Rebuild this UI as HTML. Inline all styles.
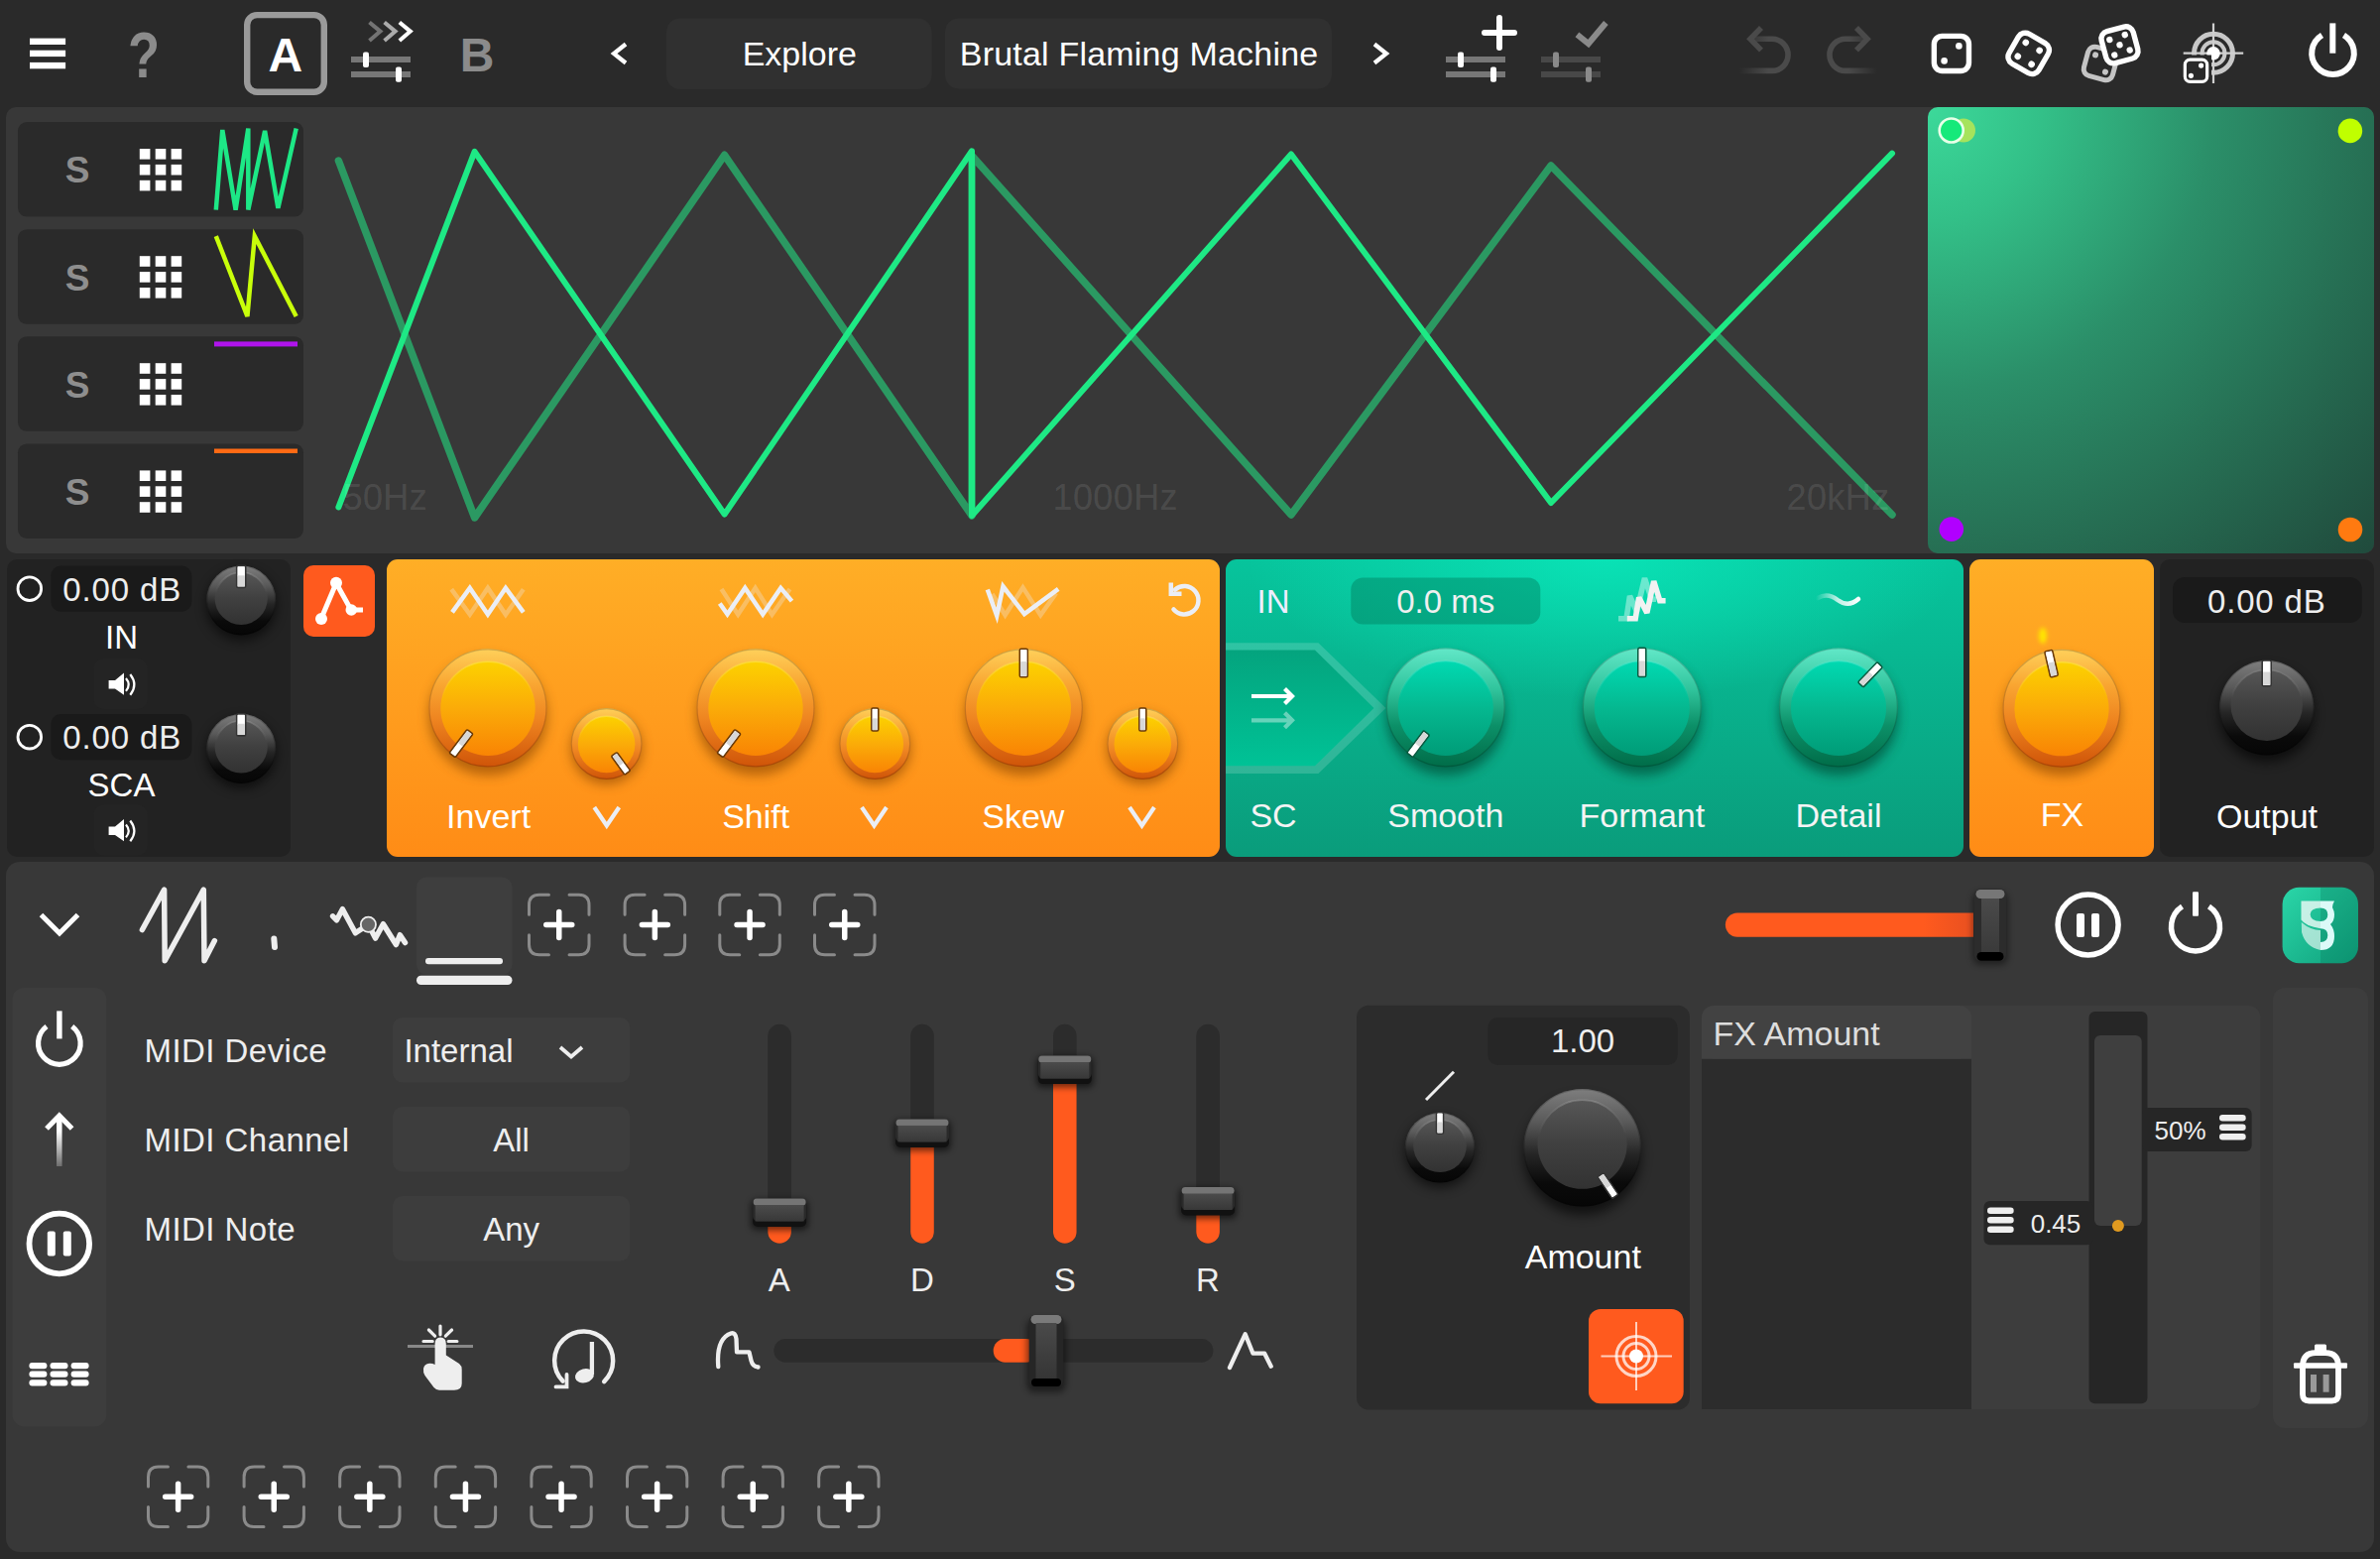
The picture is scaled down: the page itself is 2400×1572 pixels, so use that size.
<!DOCTYPE html>
<html><head><meta charset="utf-8">
<style>
*{margin:0;padding:0;box-sizing:border-box}
html,body{width:2400px;height:1572px;overflow:hidden;background:#2a2a2a;font-family:"Liberation Sans",sans-serif}
.a{position:absolute}
svg{position:absolute;left:0;top:0}
text{font-family:"Liberation Sans",sans-serif}
</style></head><body>
<div class="a" style="left:6px;top:108px;width:2388px;height:450px;background:#383838;border-radius:10px"></div>
<div class="a" style="left:1944px;top:108px;width:450px;height:450px;border-radius:10px;background:radial-gradient(farthest-corner at 0 0,#3cd99a 0%,#33c088 18%,#2b8f69 45%,#266e53 71%,#204a3c 100%)"></div>
<div class="a" style="left:7px;top:564px;width:286px;height:300px;background:#222;border-radius:10px"></div>
<div class="a" style="left:306px;top:570px;width:72px;height:72px;background:#ff5a1e;border-radius:10px"></div>
<div class="a" style="left:390px;top:564px;width:840px;height:300px;border-radius:11px;background:linear-gradient(180deg,#ffae26,#ff8c16)"></div>
<div class="a" style="left:1236px;top:564px;width:744px;height:300px;border-radius:11px;background:radial-gradient(ellipse 360px 140px at 380px 0px,rgba(10,236,190,0.75),rgba(10,236,190,0) 100%),linear-gradient(180deg,#07c49c,#0a9c7b)"></div>
<div class="a" style="left:1986px;top:564px;width:186px;height:300px;border-radius:11px;background:linear-gradient(180deg,#ffae26,#ff8c16)"></div>
<div class="a" style="left:2178px;top:564px;width:216px;height:300px;background:#222;border-radius:10px"></div>
<div class="a" style="left:6px;top:869px;width:2388px;height:696px;background:#383838;border-radius:14px"></div>
<svg width="2400" height="1572" viewBox="0 0 2400 1572">
<defs>
<filter id="blur" x="-50%" y="-50%" width="200%" height="200%"><feGaussianBlur stdDeviation="6"/></filter>
<filter id="blur2" x="-100%" y="-100%" width="300%" height="300%"><feGaussianBlur stdDeviation="2.2"/></filter>
<filter id="blur3" x="-50%" y="-50%" width="200%" height="200%"><feGaussianBlur stdDeviation="3"/></filter>
<linearGradient id="lg1" x1="0" y1="0" x2="1" y2="0"><stop offset="0" stop-color="#4a4a4a00"/><stop offset="0.6" stop-color="#4a4a4a"/><stop offset="1" stop-color="#4a4a4a"/></linearGradient><linearGradient id="lg2" x1="0" y1="0" x2="1" y2="0"><stop offset="0" stop-color="#4a4a4a"/><stop offset="0.4" stop-color="#4a4a4a"/><stop offset="1" stop-color="#4a4a4a00"/></linearGradient><linearGradient id="lg3" x1="0" y1="0" x2="0" y2="1"><stop offset="0" stop-color="#7e7e7e"/><stop offset="0.28" stop-color="#5a5a5a"/><stop offset="0.55" stop-color="#262626"/><stop offset="0.8" stop-color="#0a0a0a"/><stop offset="1" stop-color="#060606"/></linearGradient><linearGradient id="lg4" x1="0" y1="0" x2="0" y2="1"><stop offset="0" stop-color="#575757"/><stop offset="0.5" stop-color="#404040"/><stop offset="1" stop-color="#323232"/></linearGradient><linearGradient id="lg5" x1="0" y1="0" x2="0" y2="1"><stop offset="0" stop-color="#ffffff38"/><stop offset="0.4" stop-color="#ffffff00"/><stop offset="1" stop-color="#ffffff00"/></linearGradient><linearGradient id="lg6" x1="0" y1="0" x2="0" y2="1"><stop offset="0" stop-color="#7e7e7e"/><stop offset="0.28" stop-color="#5a5a5a"/><stop offset="0.55" stop-color="#262626"/><stop offset="0.8" stop-color="#0a0a0a"/><stop offset="1" stop-color="#060606"/></linearGradient><linearGradient id="lg7" x1="0" y1="0" x2="0" y2="1"><stop offset="0" stop-color="#575757"/><stop offset="0.5" stop-color="#404040"/><stop offset="1" stop-color="#323232"/></linearGradient><linearGradient id="lg8" x1="0" y1="0" x2="0" y2="1"><stop offset="0" stop-color="#ffffff38"/><stop offset="0.4" stop-color="#ffffff00"/><stop offset="1" stop-color="#ffffff00"/></linearGradient><linearGradient id="lg9" x1="0" y1="0" x2="0" y2="1"><stop offset="0" stop-color="#ffd05a"/><stop offset="0.3" stop-color="#f9a632"/><stop offset="0.6" stop-color="#ee8420"/><stop offset="1" stop-color="#cf5408"/></linearGradient><linearGradient id="lg10" x1="0" y1="0" x2="0" y2="1"><stop offset="0" stop-color="#fcd200"/><stop offset="0.5" stop-color="#fbab08"/><stop offset="1" stop-color="#f98404"/></linearGradient><linearGradient id="lg11" x1="0" y1="0" x2="0" y2="1"><stop offset="0" stop-color="#ffffff38"/><stop offset="0.4" stop-color="#ffffff00"/><stop offset="1" stop-color="#ffffff00"/></linearGradient><linearGradient id="lg12" x1="0" y1="0" x2="0" y2="1"><stop offset="0" stop-color="#ffd05a"/><stop offset="0.3" stop-color="#f9a632"/><stop offset="0.6" stop-color="#ee8420"/><stop offset="1" stop-color="#cf5408"/></linearGradient><linearGradient id="lg13" x1="0" y1="0" x2="0" y2="1"><stop offset="0" stop-color="#fcd200"/><stop offset="0.5" stop-color="#fbab08"/><stop offset="1" stop-color="#f98404"/></linearGradient><linearGradient id="lg14" x1="0" y1="0" x2="0" y2="1"><stop offset="0" stop-color="#ffffff38"/><stop offset="0.4" stop-color="#ffffff00"/><stop offset="1" stop-color="#ffffff00"/></linearGradient><linearGradient id="lg15" x1="0" y1="0" x2="0" y2="1"><stop offset="0" stop-color="#ffd05a"/><stop offset="0.3" stop-color="#f9a632"/><stop offset="0.6" stop-color="#ee8420"/><stop offset="1" stop-color="#cf5408"/></linearGradient><linearGradient id="lg16" x1="0" y1="0" x2="0" y2="1"><stop offset="0" stop-color="#fcd200"/><stop offset="0.5" stop-color="#fbab08"/><stop offset="1" stop-color="#f98404"/></linearGradient><linearGradient id="lg17" x1="0" y1="0" x2="0" y2="1"><stop offset="0" stop-color="#ffffff38"/><stop offset="0.4" stop-color="#ffffff00"/><stop offset="1" stop-color="#ffffff00"/></linearGradient><linearGradient id="lg18" x1="0" y1="0" x2="0" y2="1"><stop offset="0" stop-color="#ffd05a"/><stop offset="0.3" stop-color="#f9a632"/><stop offset="0.6" stop-color="#ee8420"/><stop offset="1" stop-color="#cf5408"/></linearGradient><linearGradient id="lg19" x1="0" y1="0" x2="0" y2="1"><stop offset="0" stop-color="#fcd200"/><stop offset="0.5" stop-color="#fbab08"/><stop offset="1" stop-color="#f98404"/></linearGradient><linearGradient id="lg20" x1="0" y1="0" x2="0" y2="1"><stop offset="0" stop-color="#ffffff38"/><stop offset="0.4" stop-color="#ffffff00"/><stop offset="1" stop-color="#ffffff00"/></linearGradient><linearGradient id="lg21" x1="0" y1="0" x2="0" y2="1"><stop offset="0" stop-color="#ffd05a"/><stop offset="0.3" stop-color="#f9a632"/><stop offset="0.6" stop-color="#ee8420"/><stop offset="1" stop-color="#cf5408"/></linearGradient><linearGradient id="lg22" x1="0" y1="0" x2="0" y2="1"><stop offset="0" stop-color="#fcd200"/><stop offset="0.5" stop-color="#fbab08"/><stop offset="1" stop-color="#f98404"/></linearGradient><linearGradient id="lg23" x1="0" y1="0" x2="0" y2="1"><stop offset="0" stop-color="#ffffff38"/><stop offset="0.4" stop-color="#ffffff00"/><stop offset="1" stop-color="#ffffff00"/></linearGradient><linearGradient id="lg24" x1="0" y1="0" x2="0" y2="1"><stop offset="0" stop-color="#ffd05a"/><stop offset="0.3" stop-color="#f9a632"/><stop offset="0.6" stop-color="#ee8420"/><stop offset="1" stop-color="#cf5408"/></linearGradient><linearGradient id="lg25" x1="0" y1="0" x2="0" y2="1"><stop offset="0" stop-color="#fcd200"/><stop offset="0.5" stop-color="#fbab08"/><stop offset="1" stop-color="#f98404"/></linearGradient><linearGradient id="lg26" x1="0" y1="0" x2="0" y2="1"><stop offset="0" stop-color="#ffffff38"/><stop offset="0.4" stop-color="#ffffff00"/><stop offset="1" stop-color="#ffffff00"/></linearGradient><linearGradient id="lg27" x1="0" y1="656" x2="0" y2="772" gradientUnits="userSpaceOnUse"><stop offset="0" stop-color="#04a47e"/><stop offset="1" stop-color="#00c296"/></linearGradient><linearGradient id="lg28" x1="0" y1="0" x2="0" y2="1"><stop offset="0" stop-color="#62e8c8"/><stop offset="0.35" stop-color="#30c49c"/><stop offset="0.65" stop-color="#0c9068"/><stop offset="1" stop-color="#006c48"/></linearGradient><linearGradient id="lg29" x1="0" y1="0" x2="0" y2="1"><stop offset="0" stop-color="#00dab2"/><stop offset="0.5" stop-color="#05b890"/><stop offset="1" stop-color="#009c78"/></linearGradient><linearGradient id="lg30" x1="0" y1="0" x2="0" y2="1"><stop offset="0" stop-color="#ffffff38"/><stop offset="0.4" stop-color="#ffffff00"/><stop offset="1" stop-color="#ffffff00"/></linearGradient><linearGradient id="lg31" x1="0" y1="0" x2="0" y2="1"><stop offset="0" stop-color="#62e8c8"/><stop offset="0.35" stop-color="#30c49c"/><stop offset="0.65" stop-color="#0c9068"/><stop offset="1" stop-color="#006c48"/></linearGradient><linearGradient id="lg32" x1="0" y1="0" x2="0" y2="1"><stop offset="0" stop-color="#00dab2"/><stop offset="0.5" stop-color="#05b890"/><stop offset="1" stop-color="#009c78"/></linearGradient><linearGradient id="lg33" x1="0" y1="0" x2="0" y2="1"><stop offset="0" stop-color="#ffffff38"/><stop offset="0.4" stop-color="#ffffff00"/><stop offset="1" stop-color="#ffffff00"/></linearGradient><linearGradient id="lg34" x1="0" y1="0" x2="0" y2="1"><stop offset="0" stop-color="#62e8c8"/><stop offset="0.35" stop-color="#30c49c"/><stop offset="0.65" stop-color="#0c9068"/><stop offset="1" stop-color="#006c48"/></linearGradient><linearGradient id="lg35" x1="0" y1="0" x2="0" y2="1"><stop offset="0" stop-color="#00dab2"/><stop offset="0.5" stop-color="#05b890"/><stop offset="1" stop-color="#009c78"/></linearGradient><linearGradient id="lg36" x1="0" y1="0" x2="0" y2="1"><stop offset="0" stop-color="#ffffff38"/><stop offset="0.4" stop-color="#ffffff00"/><stop offset="1" stop-color="#ffffff00"/></linearGradient><linearGradient id="lg37" x1="1831" y1="0" x2="1876" y2="0" gradientUnits="userSpaceOnUse"><stop offset="0" stop-color="#ffffff00"/><stop offset="0.5" stop-color="#ffffffc0"/><stop offset="1" stop-color="#ffffff"/></linearGradient><linearGradient id="lg38" x1="0" y1="0" x2="0" y2="1"><stop offset="0" stop-color="#ffd05a"/><stop offset="0.3" stop-color="#f9a632"/><stop offset="0.6" stop-color="#ee8420"/><stop offset="1" stop-color="#cf5408"/></linearGradient><linearGradient id="lg39" x1="0" y1="0" x2="0" y2="1"><stop offset="0" stop-color="#fcd200"/><stop offset="0.5" stop-color="#fbab08"/><stop offset="1" stop-color="#f98404"/></linearGradient><linearGradient id="lg40" x1="0" y1="0" x2="0" y2="1"><stop offset="0" stop-color="#ffffff38"/><stop offset="0.4" stop-color="#ffffff00"/><stop offset="1" stop-color="#ffffff00"/></linearGradient><linearGradient id="lg41" x1="0" y1="0" x2="0" y2="1"><stop offset="0" stop-color="#7e7e7e"/><stop offset="0.28" stop-color="#5a5a5a"/><stop offset="0.55" stop-color="#262626"/><stop offset="0.8" stop-color="#0a0a0a"/><stop offset="1" stop-color="#060606"/></linearGradient><linearGradient id="lg42" x1="0" y1="0" x2="0" y2="1"><stop offset="0" stop-color="#575757"/><stop offset="0.5" stop-color="#404040"/><stop offset="1" stop-color="#323232"/></linearGradient><linearGradient id="lg43" x1="0" y1="0" x2="0" y2="1"><stop offset="0" stop-color="#ffffff38"/><stop offset="0.4" stop-color="#ffffff00"/><stop offset="1" stop-color="#ffffff00"/></linearGradient><linearGradient id="lg44" x1="1740" y1="0" x2="1990" y2="0" gradientUnits="userSpaceOnUse"><stop offset="0" stop-color="#ff5a1e"/><stop offset="0.8" stop-color="#ff5a1e"/><stop offset="1" stop-color="#e85020"/></linearGradient><linearGradient id="lg45" x1="0" y1="906" x2="0" y2="960" gradientUnits="userSpaceOnUse"><stop offset="0" stop-color="#4a4a4a"/><stop offset="1" stop-color="#3a3a3a"/></linearGradient><linearGradient id="lg46" x1="0" y1="0" x2="1" y2="1"><stop offset="0" stop-color="#2ad6a8"/><stop offset="1" stop-color="#10a07c"/></linearGradient><linearGradient id="lg47" x1="0" y1="1125" x2="0" y2="1176" gradientUnits="userSpaceOnUse"><stop offset="0" stop-color="#ffffff"/><stop offset="0.3" stop-color="#ffffff"/><stop offset="1" stop-color="#ffffff40"/></linearGradient><linearGradient id="lg48" x1="0" y1="0" x2="1" y2="0"><stop offset="0" stop-color="#262626"/><stop offset="1" stop-color="#2e2e2e"/></linearGradient><linearGradient id="lg49" x1="0" y1="1214.5" x2="0" y2="1231.5" gradientUnits="userSpaceOnUse"><stop offset="0" stop-color="#4c4c4c"/><stop offset="1" stop-color="#383838"/></linearGradient><linearGradient id="lg50" x1="0" y1="1134.4" x2="0" y2="1151.4" gradientUnits="userSpaceOnUse"><stop offset="0" stop-color="#4c4c4c"/><stop offset="1" stop-color="#383838"/></linearGradient><linearGradient id="lg51" x1="0" y1="1070.6" x2="0" y2="1087.6" gradientUnits="userSpaceOnUse"><stop offset="0" stop-color="#4c4c4c"/><stop offset="1" stop-color="#383838"/></linearGradient><linearGradient id="lg52" x1="0" y1="1203" x2="0" y2="1220" gradientUnits="userSpaceOnUse"><stop offset="0" stop-color="#4c4c4c"/><stop offset="1" stop-color="#383838"/></linearGradient><linearGradient id="lg53" x1="0" y1="1334" x2="0" y2="1390" gradientUnits="userSpaceOnUse"><stop offset="0" stop-color="#4a4a4a"/><stop offset="1" stop-color="#353535"/></linearGradient><linearGradient id="lg54" x1="0" y1="0" x2="0" y2="1"><stop offset="0" stop-color="#7e7e7e"/><stop offset="0.28" stop-color="#5a5a5a"/><stop offset="0.55" stop-color="#262626"/><stop offset="0.8" stop-color="#0a0a0a"/><stop offset="1" stop-color="#060606"/></linearGradient><linearGradient id="lg55" x1="0" y1="0" x2="0" y2="1"><stop offset="0" stop-color="#575757"/><stop offset="0.5" stop-color="#404040"/><stop offset="1" stop-color="#323232"/></linearGradient><linearGradient id="lg56" x1="0" y1="0" x2="0" y2="1"><stop offset="0" stop-color="#ffffff38"/><stop offset="0.4" stop-color="#ffffff00"/><stop offset="1" stop-color="#ffffff00"/></linearGradient><linearGradient id="lg57" x1="0" y1="0" x2="0" y2="1"><stop offset="0" stop-color="#7e7e7e"/><stop offset="0.28" stop-color="#5a5a5a"/><stop offset="0.55" stop-color="#262626"/><stop offset="0.8" stop-color="#0a0a0a"/><stop offset="1" stop-color="#060606"/></linearGradient><linearGradient id="lg58" x1="0" y1="0" x2="0" y2="1"><stop offset="0" stop-color="#575757"/><stop offset="0.5" stop-color="#404040"/><stop offset="1" stop-color="#323232"/></linearGradient><linearGradient id="lg59" x1="0" y1="0" x2="0" y2="1"><stop offset="0" stop-color="#ffffff38"/><stop offset="0.4" stop-color="#ffffff00"/><stop offset="1" stop-color="#ffffff00"/></linearGradient>
</defs>
<g id="topbar"><rect x="30" y="38.6" width="36.1" height="6.4" fill="#fff"/><rect x="30" y="50.7" width="36.1" height="6.4" fill="#fff"/><rect x="30" y="62.9" width="36.1" height="6.4" fill="#fff"/><text x="145" y="78" font-size="64" font-weight="700" fill="#8b8b8b" text-anchor="middle" transform="translate(145 0) scale(0.82 1) translate(-145 0)">?</text><rect x="249.2" y="15.1" width="77.6" height="77.6" rx="10" fill="none" stroke="#9a9a9a" stroke-width="6.4"/><text x="287.8" y="72.3" font-size="48" fill="#fff" font-weight="700" text-anchor="middle" >A</text><path d="M372.5 22.5 L383.5 31.6 L372.5 41" fill="none" stroke="#747474" stroke-width="4"/><path d="M387.6 22.5 L398.6 31.6 L387.6 41" fill="none" stroke="#ababab" stroke-width="4"/><path d="M402.8 22.5 L413.8 31.6 L402.8 41" fill="none" stroke="#ffffff" stroke-width="4"/><rect x="354" y="57" width="60" height="6" fill="#777"/><rect x="354" y="72" width="60" height="6" fill="#777"/><rect x="366" y="52.4" width="6" height="15.5" rx="2" fill="#fff"/><rect x="399" y="67.5" width="6" height="15.2" rx="2" fill="#fff"/><text x="481" y="72.2" font-size="48" fill="#8b8b8b" font-weight="700" text-anchor="middle" >B</text><path d="M631 44.5 L619 54 L631 63.5" fill="none" stroke="#fff" stroke-width="4.2"/><rect x="672" y="18.5" width="267.5" height="71.5" rx="14" fill="#303030"/><text x="806.3" y="65.5" font-size="34" fill="#fff" font-weight="400" text-anchor="middle" >Explore</text><rect x="953" y="18.5" width="390" height="71" rx="14" fill="#303030"/><text x="1148.6" y="65.5" font-size="34" fill="#fff" font-weight="400" text-anchor="middle" letter-spacing="0.2">Brutal Flaming Machine</text><path d="M1386 44.5 L1398 54 L1386 63.5" fill="none" stroke="#fff" stroke-width="4.2"/><rect x="1458" y="57" width="60" height="6" fill="#777"/><rect x="1458" y="72" width="60" height="6" fill="#777"/><rect x="1470" y="52.4" width="6" height="15.5" rx="2" fill="#fff"/><rect x="1503" y="67.5" width="6" height="15.2" rx="2" fill="#fff"/><path d="M1497 33 H1527 M1512 18 V48" stroke="#fff" stroke-width="6" stroke-linecap="round"/><rect x="1554" y="57" width="60" height="6" fill="#484848"/><rect x="1554" y="72" width="60" height="6" fill="#484848"/><rect x="1566" y="52.4" width="6" height="15.5" rx="2" fill="#8a8a8a"/><rect x="1599" y="67.5" width="6" height="15.2" rx="2" fill="#8a8a8a"/><path d="M1590.4 34.8 L1601.8 44 L1619.4 23" fill="none" stroke="#8a8a8a" stroke-width="6"/><path d="M1776 28 L1765 39.3 L1776 50.6" fill="none" stroke="#4a4a4a" stroke-width="5.6"/><path d="M1766 39.3 H1787 A16 16 0 0 1 1787 71.4 H1754" fill="none" stroke="url(#lg1)" stroke-width="5.6"/><path d="M1872 28 L1883 39.3 L1872 50.6" fill="none" stroke="#4a4a4a" stroke-width="5.6"/><path d="M1882 39.3 H1861 A16 16 0 0 0 1861 71.4 H1893" fill="none" stroke="url(#lg2)" stroke-width="5.6"/><g transform="rotate(0 1967.9 53.9)"><rect x="1950.3500000000001" y="36.35" width="35.1" height="35.1" rx="8.1" fill="#2a2a2a" stroke="#fff" stroke-width="5.4"/><circle cx="1975.3925000000002" cy="46.4075" r="3.3" fill="#fff"/><circle cx="1960.6100000000001" cy="61.3925" r="3.3" fill="#fff"/></g><g transform="rotate(30 2045.7 53.9)"><rect x="2028.4" y="36.6" width="34.6" height="34.6" rx="8.0" fill="#2a2a2a" stroke="#fff" stroke-width="5.4"/><circle cx="2037.7" cy="45.9" r="3.3" fill="#fff"/><circle cx="2053.7" cy="45.9" r="3.3" fill="#fff"/><circle cx="2037.7" cy="61.9" r="3.3" fill="#fff"/><circle cx="2053.7" cy="61.9" r="3.3" fill="#fff"/></g><g transform="rotate(15 2118 64)"><rect x="2103.0" y="49.0" width="30" height="30" rx="7.0" fill="#2a2a2a" stroke="#c4c4c4" stroke-width="5"/><circle cx="2111.0" cy="57.0" r="3" fill="#c4c4c4"/><circle cx="2125.0" cy="71.0" r="3" fill="#c4c4c4"/></g><g transform="rotate(-15 2137.5 45.3)"><rect x="2120.95" y="28.749999999999996" width="33.1" height="33.1" rx="7.7" fill="#2a2a2a" stroke="#fff" stroke-width="5.4"/><circle cx="2129.03" cy="37.599999999999994" r="3.2" fill="#fff"/><circle cx="2145.2" cy="36.83" r="3.2" fill="#fff"/><circle cx="2137.5" cy="45.3" r="3.2" fill="#fff"/><circle cx="2129.8" cy="53.769999999999996" r="3.2" fill="#fff"/><circle cx="2145.97" cy="53.0" r="3.2" fill="#fff"/></g><circle cx="2232" cy="53.7" r="19.5" fill="none" stroke="#c8c8c8" stroke-width="5"/><circle cx="2232" cy="53.7" r="11.5" fill="none" stroke="#c8c8c8" stroke-width="4"/><path d="M2232 23.4 V84 M2201.7 53.7 H2262.2" stroke="#d0d0d0" stroke-width="2.2"/><circle cx="2232" cy="53.7" r="6.8" fill="#fff"/><rect x="2199" y="55.5" width="31" height="31" fill="#2a2a2a"/><g transform="rotate(0 2214.5 71.2)"><rect x="2203.35" y="60.050000000000004" width="22.3" height="22.3" rx="5.1000000000000005" fill="#2a2a2a" stroke="#fff" stroke-width="3.2"/><circle cx="2219.6" cy="66.10000000000001" r="2.6" fill="#fff"/><circle cx="2209.4" cy="76.3" r="2.6" fill="#fff"/></g><path d="M2341.5 35.5 A21.3 21.3 0 1 0 2363.5 35.5" fill="none" stroke="#fff" stroke-width="6"/><rect x="2349.3" y="23.4" width="6" height="30.3" fill="#fff"/></g><g id="row2"><rect x="18" y="123" width="288" height="95.6" rx="9" fill="#2a2a2a"/><text x="78" y="184.3" font-size="37" fill="#8e8e8e" font-weight="700" text-anchor="middle" >S</text><rect x="140.8" y="150.0" width="10.6" height="10.6" fill="#fff"/><rect x="140.8" y="165.9" width="10.6" height="10.6" fill="#fff"/><rect x="140.8" y="181.8" width="10.6" height="10.6" fill="#fff"/><rect x="156.70000000000002" y="150.0" width="10.6" height="10.6" fill="#fff"/><rect x="156.70000000000002" y="165.9" width="10.6" height="10.6" fill="#fff"/><rect x="156.70000000000002" y="181.8" width="10.6" height="10.6" fill="#fff"/><rect x="172.60000000000002" y="150.0" width="10.6" height="10.6" fill="#fff"/><rect x="172.60000000000002" y="165.9" width="10.6" height="10.6" fill="#fff"/><rect x="172.60000000000002" y="181.8" width="10.6" height="10.6" fill="#fff"/><rect x="18" y="231.2" width="288" height="95.6" rx="9" fill="#2a2a2a"/><text x="78" y="292.5" font-size="37" fill="#8e8e8e" font-weight="700" text-anchor="middle" >S</text><rect x="140.8" y="258.2" width="10.6" height="10.6" fill="#fff"/><rect x="140.8" y="274.09999999999997" width="10.6" height="10.6" fill="#fff"/><rect x="140.8" y="290.0" width="10.6" height="10.6" fill="#fff"/><rect x="156.70000000000002" y="258.2" width="10.6" height="10.6" fill="#fff"/><rect x="156.70000000000002" y="274.09999999999997" width="10.6" height="10.6" fill="#fff"/><rect x="156.70000000000002" y="290.0" width="10.6" height="10.6" fill="#fff"/><rect x="172.60000000000002" y="258.2" width="10.6" height="10.6" fill="#fff"/><rect x="172.60000000000002" y="274.09999999999997" width="10.6" height="10.6" fill="#fff"/><rect x="172.60000000000002" y="290.0" width="10.6" height="10.6" fill="#fff"/><rect x="18" y="339.2" width="288" height="95.6" rx="9" fill="#2a2a2a"/><text x="78" y="400.5" font-size="37" fill="#8e8e8e" font-weight="700" text-anchor="middle" >S</text><rect x="140.8" y="366.2" width="10.6" height="10.6" fill="#fff"/><rect x="140.8" y="382.09999999999997" width="10.6" height="10.6" fill="#fff"/><rect x="140.8" y="398.0" width="10.6" height="10.6" fill="#fff"/><rect x="156.70000000000002" y="366.2" width="10.6" height="10.6" fill="#fff"/><rect x="156.70000000000002" y="382.09999999999997" width="10.6" height="10.6" fill="#fff"/><rect x="156.70000000000002" y="398.0" width="10.6" height="10.6" fill="#fff"/><rect x="172.60000000000002" y="366.2" width="10.6" height="10.6" fill="#fff"/><rect x="172.60000000000002" y="382.09999999999997" width="10.6" height="10.6" fill="#fff"/><rect x="172.60000000000002" y="398.0" width="10.6" height="10.6" fill="#fff"/><rect x="18" y="447.4" width="288" height="95.6" rx="9" fill="#2a2a2a"/><text x="78" y="508.7" font-size="37" fill="#8e8e8e" font-weight="700" text-anchor="middle" >S</text><rect x="140.8" y="474.4" width="10.6" height="10.6" fill="#fff"/><rect x="140.8" y="490.29999999999995" width="10.6" height="10.6" fill="#fff"/><rect x="140.8" y="506.2" width="10.6" height="10.6" fill="#fff"/><rect x="156.70000000000002" y="474.4" width="10.6" height="10.6" fill="#fff"/><rect x="156.70000000000002" y="490.29999999999995" width="10.6" height="10.6" fill="#fff"/><rect x="156.70000000000002" y="506.2" width="10.6" height="10.6" fill="#fff"/><rect x="172.60000000000002" y="474.4" width="10.6" height="10.6" fill="#fff"/><rect x="172.60000000000002" y="490.29999999999995" width="10.6" height="10.6" fill="#fff"/><rect x="172.60000000000002" y="506.2" width="10.6" height="10.6" fill="#fff"/><polyline points="217.8,211.6 224.3,131 237.6,211.6 250.3,129.5 250.3,211.6 267.1,131.9 280.4,209.8 298.7,129.5" fill="none" stroke="#1de886" stroke-width="4.5" stroke-linejoin="miter" stroke-linecap="butt"/><polyline points="217.8,238.1 249.4,319 256.8,238.1 298.7,319" fill="none" stroke="#c8ff0a" stroke-width="4.5"/><rect x="216" y="344.4" width="84" height="5" fill="#b014ec"/><rect x="216" y="452.5" width="84" height="4.5" fill="#ff6a14"/><polyline points="341.4,162 478.6,522 730.6,156.3 980,520 980,157 1302,519 1564,167 1908,519" fill="none" stroke="#2b9962" stroke-width="7.5" stroke-linecap="round" stroke-linejoin="round"/><polyline points="341.4,511.4 478.6,152.9 730.6,518.6 980,152.3 980,520 1302,155.5 1564,507 1908,154.7" fill="none" stroke="#1ee985" stroke-width="6" stroke-linecap="round" stroke-linejoin="round"/><text x="345.5" y="514" font-size="36" fill="#ffffff" font-weight="400" text-anchor="start" fill-opacity="0.11" letter-spacing="0.4">50Hz</text><text x="1061.5" y="514" font-size="36" fill="#ffffff" font-weight="400" text-anchor="start" fill-opacity="0.11" letter-spacing="0.4">1000Hz</text><text x="1801.5" y="514" font-size="36" fill="#ffffff" font-weight="400" text-anchor="start" fill-opacity="0.11" letter-spacing="0.4">20kHz</text><circle cx="1980" cy="131.5" r="12" fill="#a6e35c"/><circle cx="1967.7" cy="131.5" r="12" fill="#16e97a" stroke="#e8ffe8" stroke-width="2.6"/><circle cx="2369.9" cy="131.9" r="12.3" fill="#c0ff00"/><circle cx="1967.8" cy="533.6" r="12.3" fill="#b100ff"/><circle cx="2370" cy="534" r="12.3" fill="#ff7a10"/></g><g id="row3"><circle cx="29.8" cy="593.7" r="11.8" fill="none" stroke="#fff" stroke-width="2.8"/><rect x="51.3" y="570.5" width="142" height="46.2" rx="10" fill="#1a1a1a"/><text x="123.2" y="605.8" font-size="33" fill="#eee" font-weight="400" text-anchor="middle" letter-spacing="0.85">0.00 dB</text><text x="122.5" y="653.6" font-size="33" fill="#fff" font-weight="400" text-anchor="middle" >IN</text><rect x="94.4" y="664" width="54.4" height="51" rx="10" fill="#242424"/><path d="M109.6 686.0 H116 L125 678.4 V700.8 L116 694.4 H109.6 Z" fill="#fff"/><path d="M127 684.0 Q132.5 690.4 127 696.9 M131.3 680.0 Q139.5 690.4 131.3 700.8" fill="none" stroke="#fff" stroke-width="2.2"/><circle cx="243.2" cy="610.3" r="35.0" fill="#000" opacity="0.6" filter="url(#blur)"/><circle cx="243.2" cy="605.4" r="35" fill="url(#lg3)"/><circle cx="243.2" cy="603.3" r="26.6" fill="url(#lg4)"/><circle cx="243.2" cy="603.3" r="26.0" fill="none" stroke="url(#lg5)" stroke-width="1.6"/><circle cx="243.2" cy="605.4" r="34.4" fill="none" stroke="#000" stroke-opacity="0.18" stroke-width="1.2"/><g transform="rotate(0 243.2 605.4)"><rect x="238.7" y="570.4" width="9" height="22" rx="1.5" fill="#f2f2f2" stroke="#333333" stroke-width="1.6"/><rect x="239.7" y="571.4" width="7" height="9.9" fill="#ffffff"/><rect x="239.7" y="580.3" width="7" height="11.100000000000001" fill="#d8d8d8"/></g><circle cx="29.8" cy="743.2" r="11.8" fill="none" stroke="#fff" stroke-width="2.8"/><rect x="51.3" y="720.0" width="142" height="46.2" rx="10" fill="#1a1a1a"/><text x="123.2" y="755.3" font-size="33" fill="#eee" font-weight="400" text-anchor="middle" letter-spacing="0.85">0.00 dB</text><text x="122.5" y="803.1" font-size="33" fill="#fff" font-weight="400" text-anchor="middle" >SCA</text><rect x="94.4" y="811.5" width="54.4" height="51" rx="10" fill="#242424"/><path d="M109.6 833.5 H116 L125 825.9 V848.3 L116 841.9 H109.6 Z" fill="#fff"/><path d="M127 831.5 Q132.5 837.9 127 844.4 M131.3 827.5 Q139.5 837.9 131.3 848.3" fill="none" stroke="#fff" stroke-width="2.2"/><circle cx="243.2" cy="759.8" r="35.0" fill="#000" opacity="0.6" filter="url(#blur)"/><circle cx="243.2" cy="754.9" r="35" fill="url(#lg6)"/><circle cx="243.2" cy="752.8" r="26.6" fill="url(#lg7)"/><circle cx="243.2" cy="752.8" r="26.0" fill="none" stroke="url(#lg8)" stroke-width="1.6"/><circle cx="243.2" cy="754.9" r="34.4" fill="none" stroke="#000" stroke-opacity="0.18" stroke-width="1.2"/><g transform="rotate(0 243.2 754.9)"><rect x="238.7" y="719.9" width="9" height="22" rx="1.5" fill="#f2f2f2" stroke="#333333" stroke-width="1.6"/><rect x="239.7" y="720.9" width="7" height="9.9" fill="#ffffff"/><rect x="239.7" y="729.8" width="7" height="11.100000000000001" fill="#d8d8d8"/></g><polyline points="324,623.5 339,588 354,615 366,615" fill="none" stroke="#fff" stroke-width="5" stroke-linejoin="round"/><circle cx="324" cy="624" r="6" fill="#fff"/><circle cx="339" cy="587.8" r="6" fill="#fff"/><circle cx="354.3" cy="615" r="5.8" fill="#fff"/><polyline points="455.2,594.2 473.8,619.7 491.9,592.9 509.9,619.7 527.8,594.2" fill="none" stroke="#ebeef5" stroke-width="4.5" opacity="0.3"/><polyline points="456,617.3 473.8,592.9 491.9,619.4 509.9,592.9 527.8,617.3" fill="none" stroke="#ebeef5" stroke-width="4.5"/><polyline points="727.5,594 744.2,619.7 761.7,592.9 778.5,619.7 796.5,594" fill="none" stroke="#ebeef5" stroke-width="4.5" opacity="0.3"/><polyline points="725.8,608.5 733.5,619.4 751.3,592.9 769.2,619.4 787.3,592.9 798.5,606.1" fill="none" stroke="#ebeef5" stroke-width="4.5"/><polyline points="1000.5,599 1013.6,620.2 1031.5,592.3 1049.3,620.2 1065,598.1" fill="none" stroke="#ebeef5" stroke-width="4.5" opacity="0.3"/><polyline points="995.8,594.4 1005.2,620.7 1011.5,591.3 1033,619.1 1067.2,593.9" fill="none" stroke="#ebeef5" stroke-width="4.5"/><path d="M1185 594.5 A14.2 14.2 0 1 1 1183.5 614.5" fill="none" stroke="#ebeef5" stroke-width="4.5" stroke-linecap="round"/><path d="M1180.8 587.5 V598.8 H1191.5" fill="none" stroke="#ebeef5" stroke-width="4.5"/><circle cx="492" cy="722.144" r="59.6" fill="#7a3a00" opacity="0.55" filter="url(#blur)"/><circle cx="492" cy="713.8" r="59.6" fill="url(#lg9)"/><circle cx="492" cy="714.3" r="47.68000000000001" fill="url(#lg10)"/><circle cx="492" cy="714.3" r="47.080000000000005" fill="none" stroke="url(#lg11)" stroke-width="1.6"/><circle cx="492" cy="713.8" r="59.0" fill="none" stroke="#000" stroke-opacity="0.18" stroke-width="1.2"/><g transform="rotate(-143 492 713.8)"><rect x="488.25" y="654.1999999999999" width="7.5" height="29.6" rx="1.5" fill="#f2f2f2" stroke="#6a3a08" stroke-width="1.6"/><rect x="489.25" y="655.1999999999999" width="5.5" height="13.32" fill="#ffffff"/><rect x="489.25" y="667.52" width="5.5" height="15.280000000000001" fill="#d8d8d8"/></g><circle cx="611.6" cy="755.04" r="36.0" fill="#7a3a00" opacity="0.55" filter="url(#blur)"/><circle cx="611.6" cy="750" r="36" fill="url(#lg12)"/><circle cx="611.6" cy="750.5" r="28.8" fill="url(#lg13)"/><circle cx="611.6" cy="750.5" r="28.2" fill="none" stroke="url(#lg14)" stroke-width="1.6"/><circle cx="611.6" cy="750" r="35.4" fill="none" stroke="#000" stroke-opacity="0.18" stroke-width="1.2"/><g transform="rotate(144 611.6 750)"><rect x="608.1" y="714" width="7" height="23" rx="1.5" fill="#f2f2f2" stroke="#6a3a08" stroke-width="1.6"/><rect x="609.1" y="715" width="5" height="10.35" fill="#ffffff"/><rect x="609.1" y="724.35" width="5" height="11.65" fill="#d8d8d8"/></g><circle cx="762" cy="722.144" r="59.6" fill="#7a3a00" opacity="0.55" filter="url(#blur)"/><circle cx="762" cy="713.8" r="59.6" fill="url(#lg15)"/><circle cx="762" cy="714.3" r="47.68000000000001" fill="url(#lg16)"/><circle cx="762" cy="714.3" r="47.080000000000005" fill="none" stroke="url(#lg17)" stroke-width="1.6"/><circle cx="762" cy="713.8" r="59.0" fill="none" stroke="#000" stroke-opacity="0.18" stroke-width="1.2"/><g transform="rotate(-143 762 713.8)"><rect x="758.25" y="654.1999999999999" width="7.5" height="29.6" rx="1.5" fill="#f2f2f2" stroke="#6a3a08" stroke-width="1.6"/><rect x="759.25" y="655.1999999999999" width="5.5" height="13.32" fill="#ffffff"/><rect x="759.25" y="667.52" width="5.5" height="15.280000000000001" fill="#d8d8d8"/></g><circle cx="882.3" cy="755.04" r="36.0" fill="#7a3a00" opacity="0.55" filter="url(#blur)"/><circle cx="882.3" cy="750" r="36" fill="url(#lg18)"/><circle cx="882.3" cy="750.5" r="28.8" fill="url(#lg19)"/><circle cx="882.3" cy="750.5" r="28.2" fill="none" stroke="url(#lg20)" stroke-width="1.6"/><circle cx="882.3" cy="750" r="35.4" fill="none" stroke="#000" stroke-opacity="0.18" stroke-width="1.2"/><g transform="rotate(0 882.3 750)"><rect x="878.8" y="714" width="7" height="23" rx="1.5" fill="#f2f2f2" stroke="#6a3a08" stroke-width="1.6"/><rect x="879.8" y="715" width="5" height="10.35" fill="#ffffff"/><rect x="879.8" y="724.35" width="5" height="11.65" fill="#d8d8d8"/></g><circle cx="1032.3" cy="722.144" r="59.6" fill="#7a3a00" opacity="0.55" filter="url(#blur)"/><circle cx="1032.3" cy="713.8" r="59.6" fill="url(#lg21)"/><circle cx="1032.3" cy="714.3" r="47.68000000000001" fill="url(#lg22)"/><circle cx="1032.3" cy="714.3" r="47.080000000000005" fill="none" stroke="url(#lg23)" stroke-width="1.6"/><circle cx="1032.3" cy="713.8" r="59.0" fill="none" stroke="#000" stroke-opacity="0.18" stroke-width="1.2"/><g transform="rotate(0 1032.3 713.8)"><rect x="1028.3" y="654.1999999999999" width="8" height="28.6" rx="1.5" fill="#f2f2f2" stroke="#6a3a08" stroke-width="1.6"/><rect x="1029.3" y="655.1999999999999" width="6" height="12.870000000000001" fill="#ffffff"/><rect x="1029.3" y="667.0699999999999" width="6" height="14.730000000000002" fill="#d8d8d8"/></g><circle cx="1152.3" cy="755.04" r="36.0" fill="#7a3a00" opacity="0.55" filter="url(#blur)"/><circle cx="1152.3" cy="750" r="36" fill="url(#lg24)"/><circle cx="1152.3" cy="750.5" r="28.8" fill="url(#lg25)"/><circle cx="1152.3" cy="750.5" r="28.2" fill="none" stroke="url(#lg26)" stroke-width="1.6"/><circle cx="1152.3" cy="750" r="35.4" fill="none" stroke="#000" stroke-opacity="0.18" stroke-width="1.2"/><g transform="rotate(0 1152.3 750)"><rect x="1148.8" y="714" width="7" height="23" rx="1.5" fill="#f2f2f2" stroke="#6a3a08" stroke-width="1.6"/><rect x="1149.8" y="715" width="5" height="10.35" fill="#ffffff"/><rect x="1149.8" y="724.35" width="5" height="11.65" fill="#d8d8d8"/></g><text x="492.6" y="834.8" font-size="34" fill="#fff" font-weight="400" text-anchor="middle" >Invert</text><text x="762.2" y="834.8" font-size="34" fill="#fff" font-weight="400" text-anchor="middle" >Shift</text><text x="1031.8" y="834.8" font-size="34" fill="#fff" font-weight="400" text-anchor="middle" >Skew</text><path d="M599.3 814 L611.8 832.5 L624.3 814" fill="none" stroke="#ebeef5" stroke-width="4.2"/><path d="M869.0 814 L881.5 832.5 L894.0 814" fill="none" stroke="#ebeef5" stroke-width="4.2"/><path d="M1139.0 814 L1151.5 832.5 L1164.0 814" fill="none" stroke="#ebeef5" stroke-width="4.2"/><text x="1284" y="618" font-size="33" fill="#eef" font-weight="400" text-anchor="middle" >IN</text><rect x="1362.3" y="582.4" width="191" height="47" rx="12" fill="#007a5a" opacity="0.42"/><text x="1457.8" y="618" font-size="33" fill="#f0f0f0" font-weight="400" text-anchor="middle" >0.0 ms</text><path d="M1236 648.2 H1329.5 L1397.5 714 L1329.5 780 H1236 Z" fill="#fff" opacity="0.16"/><path d="M1236 655.6 H1326 L1385.5 714 L1326 772.3 H1236 Z" fill="url(#lg27)"/><path d="M1262 702 H1303 M1295.5 694.5 L1303 702 L1295.5 709.5" fill="none" stroke="#fff" stroke-width="4.2"/><path d="M1262 726.3 H1303 M1295.5 718.8 L1303 726.3 L1295.5 733.8" fill="none" stroke="#fff" stroke-width="4.2" opacity="0.4"/><circle cx="1457.8" cy="721.8" r="60.0" fill="#05402c" opacity="0.6" filter="url(#blur)"/><circle cx="1457.8" cy="713.4" r="60" fill="url(#lg28)"/><circle cx="1457.8" cy="713.9" r="48.0" fill="url(#lg29)"/><circle cx="1457.8" cy="713.9" r="47.4" fill="none" stroke="url(#lg30)" stroke-width="1.6"/><circle cx="1457.8" cy="713.4" r="59.4" fill="none" stroke="#000" stroke-opacity="0.18" stroke-width="1.2"/><g transform="rotate(-143 1457.8 713.4)"><rect x="1454.05" y="653.4" width="7.5" height="28" rx="1.5" fill="#f2f2f2" stroke="#0a5a40" stroke-width="1.6"/><rect x="1455.05" y="654.4" width="5.5" height="12.6" fill="#ffffff"/><rect x="1455.05" y="666.0" width="5.5" height="14.400000000000002" fill="#d8d8d8"/></g><circle cx="1655.8" cy="721.8" r="60.0" fill="#05402c" opacity="0.6" filter="url(#blur)"/><circle cx="1655.8" cy="713.4" r="60" fill="url(#lg31)"/><circle cx="1655.8" cy="713.9" r="48.0" fill="url(#lg32)"/><circle cx="1655.8" cy="713.9" r="47.4" fill="none" stroke="url(#lg33)" stroke-width="1.6"/><circle cx="1655.8" cy="713.4" r="59.4" fill="none" stroke="#000" stroke-opacity="0.18" stroke-width="1.2"/><g transform="rotate(0 1655.8 713.4)"><rect x="1651.8" y="653.4" width="8" height="29" rx="1.5" fill="#f2f2f2" stroke="#0a5a40" stroke-width="1.6"/><rect x="1652.8" y="654.4" width="6" height="13.05" fill="#ffffff"/><rect x="1652.8" y="666.4499999999999" width="6" height="14.950000000000001" fill="#d8d8d8"/></g><circle cx="1854" cy="721.8" r="60.0" fill="#05402c" opacity="0.6" filter="url(#blur)"/><circle cx="1854" cy="713.4" r="60" fill="url(#lg34)"/><circle cx="1854" cy="713.9" r="48.0" fill="url(#lg35)"/><circle cx="1854" cy="713.9" r="47.4" fill="none" stroke="url(#lg36)" stroke-width="1.6"/><circle cx="1854" cy="713.4" r="59.4" fill="none" stroke="#000" stroke-opacity="0.18" stroke-width="1.2"/><g transform="rotate(44 1854 713.4)"><rect x="1850.25" y="653.4" width="7.5" height="28" rx="1.5" fill="#f2f2f2" stroke="#0a5a40" stroke-width="1.6"/><rect x="1851.25" y="654.4" width="5.5" height="12.6" fill="#ffffff"/><rect x="1851.25" y="666.0" width="5.5" height="14.400000000000002" fill="#d8d8d8"/></g><text x="1284" y="834" font-size="34" fill="#f4f4f4" font-weight="400" text-anchor="middle" >SC</text><text x="1457.8" y="834" font-size="34" fill="#f4f4f4" font-weight="400" text-anchor="middle" >Smooth</text><text x="1655.9" y="834" font-size="34" fill="#f4f4f4" font-weight="400" text-anchor="middle" >Formant</text><text x="1854" y="834" font-size="34" fill="#f4f4f4" font-weight="400" text-anchor="middle" >Detail</text><path d="M1632 623.8 H1640 L1643.5 601 L1650.5 616.5 L1658.5 583 L1665.5 604.3 H1670" fill="none" stroke="#fff" stroke-width="5.6" stroke-linejoin="miter" stroke-miterlimit="1.8" opacity="0.4"/><path d="M1640.8 623.8 H1649.2 L1652.7 602.5 L1660.8 618 L1667.7 586 L1673.8 605.8 H1679.6" fill="none" stroke="#f2f2f2" stroke-width="5.6" stroke-linejoin="miter" stroke-miterlimit="1.8"/><path d="M1833 603 Q1843 597 1853 605 Q1864 613 1874 604" fill="none" stroke="url(#lg37)" stroke-width="4.5" stroke-linecap="round"/><ellipse cx="2060" cy="641" rx="4" ry="8" fill="#ffe600" opacity="1" filter="url(#blur2)"/><circle cx="2079" cy="722.5300000000001" r="59.5" fill="#7a3a00" opacity="0.55" filter="url(#blur)"/><circle cx="2079" cy="714.2" r="59.5" fill="url(#lg38)"/><circle cx="2079" cy="714.7" r="47.6" fill="url(#lg39)"/><circle cx="2079" cy="714.7" r="47.0" fill="none" stroke="url(#lg40)" stroke-width="1.6"/><circle cx="2079" cy="714.2" r="58.9" fill="none" stroke="#000" stroke-opacity="0.18" stroke-width="1.2"/><g transform="rotate(-13 2079 714.2)"><rect x="2075.0" y="654.7" width="8" height="26.5" rx="1.5" fill="#f2f2f2" stroke="#6a3a08" stroke-width="1.6"/><rect x="2076.0" y="655.7" width="6" height="11.925" fill="#ffffff"/><rect x="2076.0" y="666.625" width="6" height="13.575000000000001" fill="#d8d8d8"/></g><text x="2079.5" y="833.2" font-size="34" fill="#fff" font-weight="400" text-anchor="middle" >FX</text><rect x="2191" y="582" width="190.7" height="46" rx="12" fill="#1a1a1a"/><text x="2285.8" y="617.7" font-size="33" fill="#eee" font-weight="400" text-anchor="middle" letter-spacing="0.85">0.00 dB</text><circle cx="2285.7" cy="720.378" r="47.7" fill="#000" opacity="0.6" filter="url(#blur)"/><circle cx="2285.7" cy="713.7" r="47.7" fill="url(#lg41)"/><circle cx="2285.7" cy="710.8380000000001" r="36.252" fill="url(#lg42)"/><circle cx="2285.7" cy="710.8380000000001" r="35.652" fill="none" stroke="url(#lg43)" stroke-width="1.6"/><circle cx="2285.7" cy="713.7" r="47.1" fill="none" stroke="#000" stroke-opacity="0.18" stroke-width="1.2"/><g transform="rotate(0 2285.7 713.7)"><rect x="2281.2" y="666.0" width="9" height="25.700000000000003" rx="1.5" fill="#f2f2f2" stroke="#333333" stroke-width="1.6"/><rect x="2282.2" y="667.0" width="7" height="11.565000000000001" fill="#ffffff"/><rect x="2282.2" y="677.565" width="7" height="13.135000000000003" fill="#d8d8d8"/></g><text x="2286" y="835" font-size="34" fill="#fff" font-weight="400" text-anchor="middle" >Output</text></g><g id="bottom"><path d="M41.5 922.5 L60 941 L78.5 922.5" fill="none" stroke="#fff" stroke-width="5"/><polyline points="143.4,937.5 165.6,897.1 166.2,968.8 205.3,897.1 206,968.8 216.4,948.6" fill="none" stroke="#eee" stroke-width="5.5" stroke-linecap="round" stroke-linejoin="round"/><path d="M276.3 946.6 L277 955" stroke="#eee" stroke-width="6" stroke-linecap="round"/><polyline points="335.6,923.8 339.5,927.8 345.4,916.7 358.4,940.8 371.4,932.3 378.6,946 386.4,931.7 399.4,952.5 403.3,942.7 408.5,950.5" fill="none" stroke="#eee" stroke-width="5.5" stroke-linecap="round" stroke-linejoin="round"/><circle cx="371.4" cy="932.3" r="7.6" fill="#666" stroke="#eee" stroke-width="1.8"/><rect x="420" y="884.6" width="96.5" height="98" rx="10" fill="#3e3e3e"/><rect x="429" y="966" width="78" height="6.2" rx="3" fill="#eee"/><rect x="420" y="983.7" width="96.5" height="9.3" rx="4.6" fill="#eee"/><path d="M533.5 922.265 V912.5849999999999 Q533.5 902.3 543.785 902.3 H553.465 M574.035 902.3 H583.715 Q594.0 902.3 594.0 912.5849999999999 V922.265 M594.0 942.8349999999999 V952.515 Q594.0 962.8 583.715 962.8 H574.035 M553.465 962.8 H543.785 Q533.5 962.8 533.5 952.515 V942.8349999999999" fill="none" stroke="#8a8a8a" stroke-width="3" stroke-linecap="round"/><path d="M550.75 932.55 H576.75 M563.75 919.55 V945.55" stroke="#fff" stroke-width="5.5" stroke-linecap="round"/><path d="M630.1 922.265 V912.5849999999999 Q630.1 902.3 640.385 902.3 H650.065 M670.635 902.3 H680.315 Q690.6 902.3 690.6 912.5849999999999 V922.265 M690.6 942.8349999999999 V952.515 Q690.6 962.8 680.315 962.8 H670.635 M650.065 962.8 H640.385 Q630.1 962.8 630.1 952.515 V942.8349999999999" fill="none" stroke="#8a8a8a" stroke-width="3" stroke-linecap="round"/><path d="M647.35 932.55 H673.35 M660.35 919.55 V945.55" stroke="#fff" stroke-width="5.5" stroke-linecap="round"/><path d="M725.8 922.265 V912.5849999999999 Q725.8 902.3 736.0849999999999 902.3 H745.765 M766.3349999999999 902.3 H776.015 Q786.3 902.3 786.3 912.5849999999999 V922.265 M786.3 942.8349999999999 V952.515 Q786.3 962.8 776.015 962.8 H766.3349999999999 M745.765 962.8 H736.0849999999999 Q725.8 962.8 725.8 952.515 V942.8349999999999" fill="none" stroke="#8a8a8a" stroke-width="3" stroke-linecap="round"/><path d="M743.05 932.55 H769.05 M756.05 919.55 V945.55" stroke="#fff" stroke-width="5.5" stroke-linecap="round"/><path d="M821.5 922.265 V912.5849999999999 Q821.5 902.3 831.785 902.3 H841.465 M862.035 902.3 H871.715 Q882.0 902.3 882.0 912.5849999999999 V922.265 M882.0 942.8349999999999 V952.515 Q882.0 962.8 871.715 962.8 H862.035 M841.465 962.8 H831.785 Q821.5 962.8 821.5 952.515 V942.8349999999999" fill="none" stroke="#8a8a8a" stroke-width="3" stroke-linecap="round"/><path d="M838.75 932.55 H864.75 M851.75 919.55 V945.55" stroke="#fff" stroke-width="5.5" stroke-linecap="round"/><path d="M1752 920.5 H1990 V944.7 H1752 A12.1 12.1 0 0 1 1752 920.5 Z" fill="url(#lg44)"/><rect x="1989" y="899" width="36" height="74" rx="8" fill="#000" opacity="0.4" filter="url(#blur3)"/><rect x="1991" y="896.3" width="32" height="72.7" rx="6" fill="#2c2c2c"/><rect x="1992.5" y="897" width="29" height="9" rx="4.5" fill="#777"/><rect x="1998" y="906" width="18" height="54" fill="url(#lg45)"/><rect x="1993.5" y="960" width="27" height="8.8" rx="4.4" fill="#000"/><circle cx="2105.6" cy="932.5" r="30.5" fill="none" stroke="#fff" stroke-width="5.5"/><rect x="2094" y="921" width="8" height="24" rx="2" fill="#fff"/><rect x="2109" y="921" width="8" height="24" rx="2" fill="#fff"/><path d="M2200.5 914 A24.5 24.5 0 1 0 2227.5 914" fill="none" stroke="#fff" stroke-width="5.5"/><rect x="2211" y="899.3" width="6" height="24.5" rx="1" fill="#fff"/><rect x="2301.6" y="894.8" width="76.4" height="76.5" rx="17" fill="url(#lg46)"/><path d="M2340 894.8 H2361 Q2378 894.8 2378 911.8 V954.3 Q2378 971.3 2361 971.3 H2340 Z" fill="#006a50" opacity="0.25"/><path d="M2340 908.5 H2354 Q2352 912 2352 915 Q2354 919 2354 922 Q2354 929 2350 932 Q2354 937 2354 944 Q2354 958 2340 958 Z M2340 915.5 V928.9 Q2347.3 928.9 2347.3 922.2 Q2347.3 915.5 2340 915.5 Z M2340 936.2 V950 Q2347.3 950 2347.3 943.1 Q2347.3 936.2 2340 936.2 Z" fill="#dcfaf8" fill-rule="evenodd"/><path d="M2320.5 908.5 H2340 V915.5 Q2330 915.5 2329.6 922 Q2330 928.9 2340 928.9 V936.2 Q2325 934 2320.5 927.5 Z" fill="#fff" opacity="0.75"/><path d="M2320.8 930 Q2330 938 2340 938 V958 Q2325 955 2321 940 Z" fill="#fff" opacity="0.6"/><rect x="12.4" y="996" width="95" height="442.5" rx="12" fill="#3d3d3d"/><path d="M47 1035 A21.3 21.3 0 1 0 72.7 1035" fill="none" stroke="#fff" stroke-width="5.2"/><rect x="57.2" y="1019.4" width="5.4" height="28" fill="#fff"/><path d="M59.8 1127 V1176" stroke="url(#lg47)" stroke-width="5.5"/><path d="M47 1138 L59.8 1125 L72.6 1138" fill="none" stroke="#fff" stroke-width="5.2"/><circle cx="59.8" cy="1254" r="30.3" fill="none" stroke="#fff" stroke-width="5.8"/><rect x="47.8" y="1241.5" width="8" height="25" rx="2" fill="#fff"/><rect x="63.8" y="1241.5" width="8" height="25" rx="2" fill="#fff"/><rect x="29.4" y="1374.0" width="18" height="6.2" rx="3" fill="#fff"/><rect x="29.4" y="1382.6" width="18" height="6.2" rx="3" fill="#fff"/><rect x="29.4" y="1391.2" width="18" height="6.2" rx="3" fill="#fff"/><rect x="50.5" y="1374.0" width="18" height="6.2" rx="3" fill="#fff"/><rect x="50.5" y="1382.6" width="18" height="6.2" rx="3" fill="#fff"/><rect x="50.5" y="1391.2" width="18" height="6.2" rx="3" fill="#fff"/><rect x="71.6" y="1374.0" width="18" height="6.2" rx="3" fill="#fff"/><rect x="71.6" y="1382.6" width="18" height="6.2" rx="3" fill="#fff"/><rect x="71.6" y="1391.2" width="18" height="6.2" rx="3" fill="#fff"/><text x="145.5" y="1070.9" font-size="33" fill="#eee" font-weight="400" text-anchor="start" letter-spacing="0.45">MIDI Device</text><rect x="396" y="1025.9" width="239.3" height="65.5" rx="10" fill="#3d3d3d"/><text x="407.4" y="1070.9" font-size="33" fill="#eee" font-weight="400" text-anchor="start" >Internal</text><path d="M565 1056 L576 1065.5 L587 1056" fill="none" stroke="#eee" stroke-width="3.8"/><text x="145.5" y="1161" font-size="33" fill="#eee" font-weight="400" text-anchor="start" letter-spacing="0.45">MIDI Channel</text><rect x="396" y="1116" width="239.3" height="65.5" rx="10" fill="#3d3d3d"/><text x="515.6" y="1161" font-size="33" fill="#eee" font-weight="400" text-anchor="middle" >All</text><text x="145.5" y="1251" font-size="33" fill="#eee" font-weight="400" text-anchor="start" letter-spacing="0.45">MIDI Note</text><rect x="396" y="1206" width="239.3" height="65.5" rx="10" fill="#3d3d3d"/><text x="515.6" y="1251" font-size="33" fill="#eee" font-weight="400" text-anchor="middle" >Any</text><path d="M411 1357.4 H477" stroke="#888" stroke-width="3"/><path d="M444 1337 V1345.8 M432.4 1341 L438.6 1347.2 M455.6 1341 L449.3 1347.2 M427 1352.5 H436.2 M452.2 1352.5 H460.9" stroke="#eee" stroke-width="3.2" stroke-linecap="round"/><path d="M438.6 1355 Q438.6 1348.5 444.2 1348.5 Q449.8 1348.5 449.8 1355 V1366.5 L463 1375 Q465.7 1377 465.7 1381 V1395 Q465.7 1401.8 458 1401.8 H443 Q440 1401.8 437.5 1399 L428.5 1387 Q426.5 1384 427 1380 Q428 1375 433 1374.8 Q436 1374.6 438.6 1376 Z" fill="#eee"/><path d="M567.6 1392.6 A29.5 29.5 0 1 1 609.2 1393.1" fill="none" stroke="#eee" stroke-width="4.5" stroke-linecap="round"/><path d="M571.5 1386 V1398.4 H560.5" fill="none" stroke="#eee" stroke-width="3.8" stroke-linecap="round" stroke-linejoin="miter"/><path d="M596.9 1353 V1386" stroke="#eee" stroke-width="4.3"/><ellipse cx="589.4" cy="1387.3" rx="9.6" ry="7" fill="#eee" transform="rotate(-15 589.4 1387.3)"/><rect x="774.3" y="1032.7" width="23.6" height="221" rx="11.8" fill="#2c2c2c"/><rect x="774.3" y="1222.5" width="23.6" height="31.200000000000045" rx="11.8" fill="#ff5a1e"/><rect x="757.0999999999999" y="1209.5" width="58" height="31" rx="6" fill="#000" filter="url(#blur3)" opacity="0.55"/><rect x="759.0999999999999" y="1208.5" width="54" height="28.5" rx="5" fill="#111"/><rect x="759.0999999999999" y="1208.5" width="54" height="23" rx="5" fill="#2a2a2a"/><rect x="759.5999999999999" y="1208.5" width="53" height="7" rx="3.5" fill="#757575"/><rect x="761.5999999999999" y="1215.0" width="49" height="16.5" fill="url(#lg49)"/><rect x="918.2" y="1032.7" width="23.6" height="221" rx="11.8" fill="#2c2c2c"/><rect x="918.2" y="1142.4" width="23.6" height="111.29999999999995" rx="11.8" fill="#ff5a1e"/><rect x="901.0" y="1129.4" width="58" height="31" rx="6" fill="#000" filter="url(#blur3)" opacity="0.55"/><rect x="903.0" y="1128.4" width="54" height="28.5" rx="5" fill="#111"/><rect x="903.0" y="1128.4" width="54" height="23" rx="5" fill="#2a2a2a"/><rect x="903.5" y="1128.4" width="53" height="7" rx="3.5" fill="#757575"/><rect x="905.5" y="1134.9" width="49" height="16.5" fill="url(#lg50)"/><rect x="1062" y="1032.7" width="23.6" height="221" rx="11.8" fill="#2c2c2c"/><rect x="1062" y="1078.6" width="23.6" height="175.10000000000014" rx="11.8" fill="#ff5a1e"/><rect x="1044.8" y="1065.6" width="58" height="31" rx="6" fill="#000" filter="url(#blur3)" opacity="0.55"/><rect x="1046.8" y="1064.6" width="54" height="28.5" rx="5" fill="#111"/><rect x="1046.8" y="1064.6" width="54" height="23" rx="5" fill="#2a2a2a"/><rect x="1047.3" y="1064.6" width="53" height="7" rx="3.5" fill="#757575"/><rect x="1049.3" y="1071.1" width="49" height="16.5" fill="url(#lg51)"/><rect x="1206.3" y="1032.7" width="23.6" height="221" rx="11.8" fill="#2c2c2c"/><rect x="1206.3" y="1211" width="23.6" height="42.700000000000045" rx="11.8" fill="#ff5a1e"/><rect x="1189.1" y="1198" width="58" height="31" rx="6" fill="#000" filter="url(#blur3)" opacity="0.55"/><rect x="1191.1" y="1197" width="54" height="28.5" rx="5" fill="#111"/><rect x="1191.1" y="1197" width="54" height="23" rx="5" fill="#2a2a2a"/><rect x="1191.6" y="1197" width="53" height="7" rx="3.5" fill="#757575"/><rect x="1193.6" y="1203.5" width="49" height="16.5" fill="url(#lg52)"/><text x="785.8" y="1302.3" font-size="33" fill="#eee" font-weight="400" text-anchor="middle" >A</text><text x="929.8" y="1302.3" font-size="33" fill="#eee" font-weight="400" text-anchor="middle" >D</text><text x="1073.8" y="1302.3" font-size="33" fill="#eee" font-weight="400" text-anchor="middle" >S</text><text x="1217.9" y="1302.3" font-size="33" fill="#eee" font-weight="400" text-anchor="middle" >R</text><rect x="780.4" y="1350" width="443" height="23.8" rx="11.9" fill="#2c2c2c"/><rect x="1001.7" y="1350" width="45" height="23.8" rx="11.9" fill="#ff5a1e"/><rect x="1035" y="1330" width="40" height="74" rx="8" fill="#000" opacity="0.45" filter="url(#blur3)"/><rect x="1037.7" y="1326" width="34.7" height="72" rx="6" fill="#262626"/><rect x="1039.5" y="1326" width="31" height="9" rx="4.5" fill="#7a7a7a"/><rect x="1044.5" y="1334" width="21" height="56" fill="url(#lg53)"/><rect x="1040" y="1390" width="30" height="8" rx="4" fill="#000"/><path d="M724.3 1378 Q722 1350 737 1344.5 Q741.5 1343 742.5 1350 L743 1363.4 H755.5 L757.5 1372 Q759 1378 764.5 1378.5" fill="none" stroke="#eee" stroke-width="4.3" stroke-linecap="round" stroke-linejoin="round"/><polyline points="1240,1379 1255.7,1345.2 1263.5,1364.7 1275.2,1364.7 1281.7,1377.7" fill="none" stroke="#eee" stroke-width="4.3" stroke-linecap="round" stroke-linejoin="round"/><rect x="1368" y="1013.8" width="336" height="407.8" rx="12" fill="#2c2c2c"/><rect x="1500.4" y="1026" width="191.2" height="48" rx="10" fill="#262626"/><text x="1596" y="1061.3" font-size="33" fill="#eee" font-weight="400" text-anchor="middle" >1.00</text><path d="M1438 1109 L1466 1080.8" stroke="#eee" stroke-width="3"/><circle cx="1452" cy="1162.242" r="35.3" fill="#000" opacity="0.6" filter="url(#blur)"/><circle cx="1452" cy="1157.3" r="35.3" fill="url(#lg54)"/><circle cx="1452" cy="1155.182" r="26.828" fill="url(#lg55)"/><circle cx="1452" cy="1155.182" r="26.227999999999998" fill="none" stroke="url(#lg56)" stroke-width="1.6"/><circle cx="1452" cy="1157.3" r="34.699999999999996" fill="none" stroke="#000" stroke-opacity="0.18" stroke-width="1.2"/><g transform="rotate(0 1452 1157.3)"><rect x="1448.5" y="1121.8" width="7" height="21.5" rx="1.5" fill="#f2f2f2" stroke="#333333" stroke-width="1.6"/><rect x="1449.5" y="1122.8" width="5" height="9.675" fill="#ffffff"/><rect x="1449.5" y="1131.475" width="5" height="10.825000000000001" fill="#d8d8d8"/></g><circle cx="1595.6" cy="1165.6019999999999" r="59.3" fill="#000" opacity="0.6" filter="url(#blur)"/><circle cx="1595.6" cy="1157.3" r="59.3" fill="url(#lg57)"/><circle cx="1595.6" cy="1153.742" r="45.068" fill="url(#lg58)"/><circle cx="1595.6" cy="1153.742" r="44.467999999999996" fill="none" stroke="url(#lg59)" stroke-width="1.6"/><circle cx="1595.6" cy="1157.3" r="58.699999999999996" fill="none" stroke="#000" stroke-opacity="0.18" stroke-width="1.2"/><g transform="rotate(146 1595.6 1157.3)"><rect x="1591.85" y="1098.0" width="7.5" height="26.299999999999997" rx="1.5" fill="#f2f2f2" stroke="#333333" stroke-width="1.6"/><rect x="1592.85" y="1099.0" width="5.5" height="11.834999999999999" fill="#ffffff"/><rect x="1592.85" y="1109.835" width="5.5" height="13.465" fill="#d8d8d8"/></g><text x="1596.3" y="1278.7" font-size="34" fill="#fff" font-weight="400" text-anchor="middle" >Amount</text><rect x="1602" y="1320" width="95.7" height="95.3" rx="12" fill="#ff5a1e"/><circle cx="1650" cy="1367.5" r="20" fill="none" stroke="#fff" stroke-width="3" opacity="0.75"/><circle cx="1650" cy="1367.5" r="13" fill="none" stroke="#fff" stroke-width="3" opacity="0.75"/><path d="M1650 1333 V1402 M1614.5 1367.5 H1686" stroke="#fff" stroke-width="2" opacity="0.7"/><circle cx="1650" cy="1367.5" r="7" fill="#fff"/><rect x="1716" y="1014" width="563.4" height="407" rx="12" fill="#3d3d3d"/><rect x="1716" y="1067.6" width="272" height="353.4" fill="#2c2c2c"/><rect x="1716" y="1400" width="30" height="21" fill="#2c2c2c"/><rect x="1716" y="1014" width="272" height="53.6" rx="12" fill="#424242"/><rect x="1716" y="1050" width="272" height="17.6" fill="#424242"/><text x="1727.5" y="1053.5" font-size="34" fill="#ddd" font-weight="400" text-anchor="start" >FX Amount</text><rect x="2106.5" y="1020" width="59" height="395.3" rx="6" fill="#262626"/><rect x="2112" y="1044" width="47.7" height="192" rx="6" fill="#3f3f3f"/><circle cx="2135.9" cy="1235.9" r="6" fill="#e09a20"/><rect x="2160" y="1117" width="110.6" height="44" rx="6" fill="#262626"/><text x="2198.5" y="1148.8" font-size="26" fill="#eee" font-weight="400" text-anchor="middle" >50%</text><rect x="2238" y="1124.0" width="26.7" height="6.5" rx="3.2" fill="#eee"/><rect x="2238" y="1133.5" width="26.7" height="6.5" rx="3.2" fill="#eee"/><rect x="2238" y="1143.0" width="26.7" height="6.5" rx="3.2" fill="#eee"/><rect x="2000.5" y="1211" width="110" height="44.3" rx="6" fill="#262626"/><text x="2073" y="1242.5" font-size="26" fill="#eee" font-weight="400" text-anchor="middle" >0.45</text><rect x="2004" y="1217.5" width="26.7" height="6.5" rx="3.2" fill="#eee"/><rect x="2004" y="1227.0" width="26.7" height="6.5" rx="3.2" fill="#eee"/><rect x="2004" y="1236.5" width="26.7" height="6.5" rx="3.2" fill="#eee"/><rect x="2292" y="996" width="96" height="444" rx="12" fill="#3d3d3d"/><rect x="2334" y="1355.5" width="12" height="9" rx="1.5" fill="#fff"/><path d="M2322 1378 V1406 Q2322 1412.5 2328.5 1412.5 H2351.5 Q2358 1412.5 2358 1406 V1378 Q2358 1364.2 2345 1364.2 H2335 Q2322 1364.2 2322 1378" fill="none" stroke="#fff" stroke-width="5.8"/><rect x="2313" y="1374.2" width="54" height="5.6" rx="1" fill="#fff"/><rect x="2330" y="1386" width="6" height="17.7" fill="#9a9a9a"/><rect x="2342.6" y="1386" width="6" height="17.7" fill="#9a9a9a"/><path d="M149.5 1498.9989999999998 V1489.3509999999999 Q149.5 1479.1 159.751 1479.1 H169.399 M189.901 1479.1 H199.549 Q209.8 1479.1 209.8 1489.3509999999999 V1498.9989999999998 M209.8 1519.5009999999997 V1529.149 Q209.8 1539.3999999999999 199.549 1539.3999999999999 H189.901 M169.399 1539.3999999999999 H159.751 Q149.5 1539.3999999999999 149.5 1529.149 V1519.5009999999997" fill="none" stroke="#8a8a8a" stroke-width="3" stroke-linecap="round"/><path d="M166.65 1509.25 H192.65 M179.65 1496.25 V1522.25" stroke="#fff" stroke-width="5.5" stroke-linecap="round"/><path d="M246.1 1498.9989999999998 V1489.3509999999999 Q246.1 1479.1 256.351 1479.1 H265.999 M286.501 1479.1 H296.149 Q306.4 1479.1 306.4 1489.3509999999999 V1498.9989999999998 M306.4 1519.5009999999997 V1529.149 Q306.4 1539.3999999999999 296.149 1539.3999999999999 H286.501 M265.999 1539.3999999999999 H256.351 Q246.1 1539.3999999999999 246.1 1529.149 V1519.5009999999997" fill="none" stroke="#8a8a8a" stroke-width="3" stroke-linecap="round"/><path d="M263.25 1509.25 H289.25 M276.25 1496.25 V1522.25" stroke="#fff" stroke-width="5.5" stroke-linecap="round"/><path d="M342.7 1498.9989999999998 V1489.3509999999999 Q342.7 1479.1 352.95099999999996 1479.1 H362.599 M383.101 1479.1 H392.749 Q403.0 1479.1 403.0 1489.3509999999999 V1498.9989999999998 M403.0 1519.5009999999997 V1529.149 Q403.0 1539.3999999999999 392.749 1539.3999999999999 H383.101 M362.599 1539.3999999999999 H352.95099999999996 Q342.7 1539.3999999999999 342.7 1529.149 V1519.5009999999997" fill="none" stroke="#8a8a8a" stroke-width="3" stroke-linecap="round"/><path d="M359.84999999999997 1509.25 H385.84999999999997 M372.84999999999997 1496.25 V1522.25" stroke="#fff" stroke-width="5.5" stroke-linecap="round"/><path d="M439.29999999999995 1498.9989999999998 V1489.3509999999999 Q439.29999999999995 1479.1 449.55099999999993 1479.1 H459.19899999999996 M479.70099999999996 1479.1 H489.349 Q499.59999999999997 1479.1 499.59999999999997 1489.3509999999999 V1498.9989999999998 M499.59999999999997 1519.5009999999997 V1529.149 Q499.59999999999997 1539.3999999999999 489.349 1539.3999999999999 H479.70099999999996 M459.19899999999996 1539.3999999999999 H449.55099999999993 Q439.29999999999995 1539.3999999999999 439.29999999999995 1529.149 V1519.5009999999997" fill="none" stroke="#8a8a8a" stroke-width="3" stroke-linecap="round"/><path d="M456.44999999999993 1509.25 H482.44999999999993 M469.44999999999993 1496.25 V1522.25" stroke="#fff" stroke-width="5.5" stroke-linecap="round"/><path d="M535.9 1498.9989999999998 V1489.3509999999999 Q535.9 1479.1 546.151 1479.1 H555.799 M576.3009999999999 1479.1 H585.949 Q596.1999999999999 1479.1 596.1999999999999 1489.3509999999999 V1498.9989999999998 M596.1999999999999 1519.5009999999997 V1529.149 Q596.1999999999999 1539.3999999999999 585.949 1539.3999999999999 H576.3009999999999 M555.799 1539.3999999999999 H546.151 Q535.9 1539.3999999999999 535.9 1529.149 V1519.5009999999997" fill="none" stroke="#8a8a8a" stroke-width="3" stroke-linecap="round"/><path d="M553.05 1509.25 H579.05 M566.05 1496.25 V1522.25" stroke="#fff" stroke-width="5.5" stroke-linecap="round"/><path d="M632.5 1498.9989999999998 V1489.3509999999999 Q632.5 1479.1 642.751 1479.1 H652.399 M672.901 1479.1 H682.549 Q692.8 1479.1 692.8 1489.3509999999999 V1498.9989999999998 M692.8 1519.5009999999997 V1529.149 Q692.8 1539.3999999999999 682.549 1539.3999999999999 H672.901 M652.399 1539.3999999999999 H642.751 Q632.5 1539.3999999999999 632.5 1529.149 V1519.5009999999997" fill="none" stroke="#8a8a8a" stroke-width="3" stroke-linecap="round"/><path d="M649.65 1509.25 H675.65 M662.65 1496.25 V1522.25" stroke="#fff" stroke-width="5.5" stroke-linecap="round"/><path d="M729.0999999999999 1498.9989999999998 V1489.3509999999999 Q729.0999999999999 1479.1 739.3509999999999 1479.1 H748.9989999999999 M769.5009999999999 1479.1 H779.1489999999999 Q789.3999999999999 1479.1 789.3999999999999 1489.3509999999999 V1498.9989999999998 M789.3999999999999 1519.5009999999997 V1529.149 Q789.3999999999999 1539.3999999999999 779.1489999999999 1539.3999999999999 H769.5009999999999 M748.9989999999999 1539.3999999999999 H739.3509999999999 Q729.0999999999999 1539.3999999999999 729.0999999999999 1529.149 V1519.5009999999997" fill="none" stroke="#8a8a8a" stroke-width="3" stroke-linecap="round"/><path d="M746.2499999999999 1509.25 H772.2499999999999 M759.2499999999999 1496.25 V1522.25" stroke="#fff" stroke-width="5.5" stroke-linecap="round"/><path d="M825.6999999999999 1498.9989999999998 V1489.3509999999999 Q825.6999999999999 1479.1 835.9509999999999 1479.1 H845.5989999999999 M866.1009999999999 1479.1 H875.7489999999999 Q885.9999999999999 1479.1 885.9999999999999 1489.3509999999999 V1498.9989999999998 M885.9999999999999 1519.5009999999997 V1529.149 Q885.9999999999999 1539.3999999999999 875.7489999999999 1539.3999999999999 H866.1009999999999 M845.5989999999999 1539.3999999999999 H835.9509999999999 Q825.6999999999999 1539.3999999999999 825.6999999999999 1529.149 V1519.5009999999997" fill="none" stroke="#8a8a8a" stroke-width="3" stroke-linecap="round"/><path d="M842.8499999999999 1509.25 H868.8499999999999 M855.8499999999999 1496.25 V1522.25" stroke="#fff" stroke-width="5.5" stroke-linecap="round"/></g>
</svg>
</body></html>
